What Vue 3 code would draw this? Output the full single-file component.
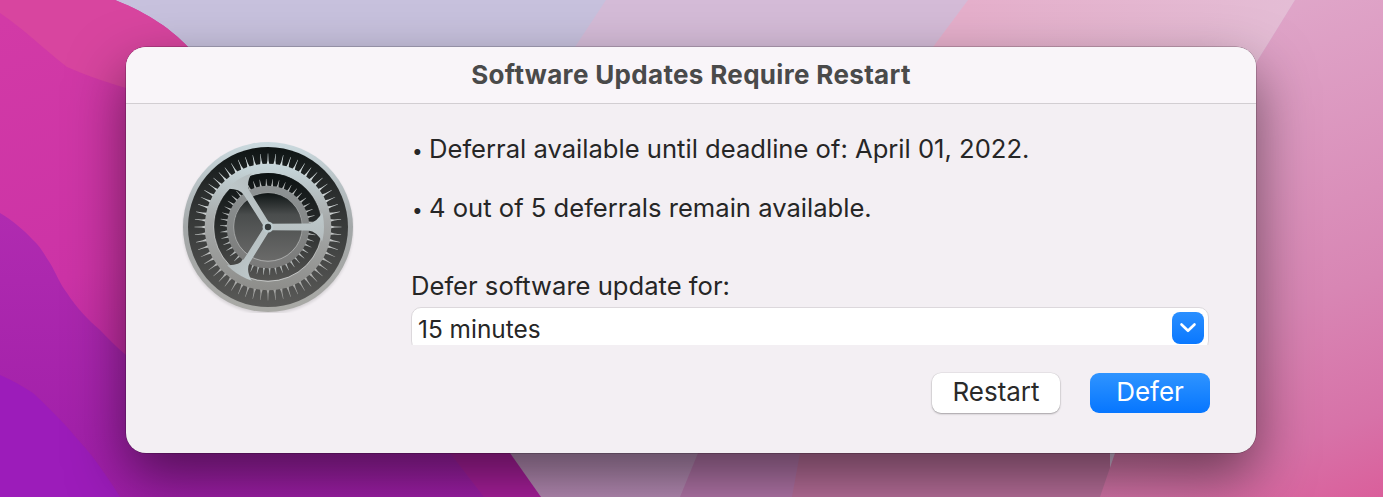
<script setup>
const cx = 86
const cy = 86
function teeth(count, rBase, rTip, halfBase, offset = 0) {
  const out = []
  for (let i = 0; i < count; i++) {
    const a = offset + (i / count) * Math.PI * 2
    const c = Math.cos(a)
    const s = Math.sin(a)
    const px = -s
    const py = c
    const pt = (r, w) => `${(cx + c * r + px * w).toFixed(2)},${(cy + s * r + py * w).toFixed(2)}`
    out.push(`${pt(rBase, -halfBase)} ${pt(rBase + (rTip - rBase) * 0.45, -0.55)} ${pt(rTip, -0.2)} ${pt(rTip, 0.2)} ${pt(rBase + (rTip - rBase) * 0.45, 0.55)} ${pt(rBase, halfBase)}`)
  }
  return out
}
const outerTeeth = teeth(60, 61, 73.5, 1.7)
const innerTeeth = teeth(46, 40, 48, 1.2, 0.03)
const spokes = [0, 122, -122]
</script>

<template>
  <div class="desktop">
    <svg class="wallpaper" viewBox="0 0 1383 497" aria-hidden="true">
      <defs>
        <linearGradient id="rightPink" gradientUnits="userSpaceOnUse" x1="1200" y1="0" x2="1383" y2="497">
          <stop offset="0" stop-color="#e0a9cb" />
          <stop offset="0.6" stop-color="#d886b4" />
          <stop offset="0.85" stop-color="#d772a8" />
          <stop offset="1" stop-color="#da5f9b" />
        </linearGradient>
        <linearGradient id="wedge" gradientUnits="userSpaceOnUse" x1="968" y1="0" x2="1295" y2="0">
          <stop offset="0" stop-color="#e5afcb" />
          <stop offset="1" stop-color="#e4bdd5" />
        </linearGradient>
        <linearGradient id="magenta" gradientUnits="userSpaceOnUse" x1="60" y1="0" x2="240" y2="497">
          <stop offset="0" stop-color="#d23aa6" />
          <stop offset="0.5" stop-color="#cc33a6" />
          <stop offset="1" stop-color="#ab1f9e" />
        </linearGradient>
        <linearGradient id="purple" gradientUnits="userSpaceOnUse" x1="0" y1="213" x2="0" y2="497">
          <stop offset="0" stop-color="#b02bb0" />
          <stop offset="1" stop-color="#9f1ea8" />
        </linearGradient>
        <linearGradient id="bandA" gradientUnits="userSpaceOnUse" x1="0" y1="300" x2="0" y2="497">
          <stop offset="0" stop-color="#b898bb" />
          <stop offset="1" stop-color="#b88cb6" />
        </linearGradient>
      </defs>
      <rect width="1383" height="497" fill="#d4bbd7" />
      <path d="M0 0 L606 0 L575 47 L575 300 L0 300 Z" fill="#c7c1dd" />
      <rect x="400" y="300" width="700" height="197" fill="url(#bandA)" />
      <path d="M698 453 L680 497 L1110 497 L1110 300 L698 300 Z" fill="#b476aa" />
      <path d="M800 453 L792 497 L1110 497 L1110 300 L800 300 Z" fill="#bb709c" />
      <path d="M968 0 L1295 0 L1256 63 L1256 200 L933 200 L933 47 Z" fill="url(#wedge)" />
      <path d="M1295 0 L1383 0 L1383 497 L1100 497 L1115 453 L1256 63 Z" fill="url(#rightPink)" />
      <path d="M0 0 L115 0 C150 14 172 30 188 47 L510 453 L541 497 L0 497 Z" fill="url(#magenta)" />
      <path d="M50 0 L115 0 C150 14 172 30 188 47 L200 90 L126 88 C100 80 85 75 67 67 C45 50 25 30 0 13 L0 0 Z" fill="#d8459f" />
      <path d="M0 213 C12 220 24 230 33 240 C40 246 44 254 50 263 C56 273 60 284 67 293 C76 307 88 320 100 330 C108 338 116 347 126 355 L450 453 L484 497 L0 497 Z" fill="url(#purple)" />
      <path d="M0 375 C12 380 22 386 33 393 C45 404 56 415 67 427 C78 440 90 452 100 467 C108 478 114 487 120 497 L0 497 Z" fill="#9c1cba" />
    </svg>

    <section class="dialog">
      <header class="titlebar">Software Updates Require Restart</header>
      <div class="body">
        <svg class="gear" viewBox="0 0 172 172" aria-hidden="true">
          <defs>
            <linearGradient id="rim" x1="0" y1="0" x2="0" y2="1">
              <stop offset="0" stop-color="#cbdadf" />
              <stop offset="0.5" stop-color="#a3a7a8" />
              <stop offset="1" stop-color="#a9a9a5" />
            </linearGradient>
            <linearGradient id="well" x1="0" y1="0" x2="0" y2="1">
              <stop offset="0" stop-color="#0e1414" />
              <stop offset="0.3" stop-color="#2c2f2f" />
              <stop offset="1" stop-color="#5a5a58" />
            </linearGradient>
            <linearGradient id="metal" gradientUnits="userSpaceOnUse" x1="0" y1="22" x2="0" y2="150">
              <stop offset="0" stop-color="#c8d8dc" />
              <stop offset="0.45" stop-color="#a6a9a9" />
              <stop offset="1" stop-color="#8d8d8a" />
            </linearGradient>
            <linearGradient id="tooth" gradientUnits="userSpaceOnUse" x1="0" y1="12" x2="0" y2="160">
              <stop offset="0" stop-color="#d4dfe1" />
              <stop offset="0.5" stop-color="#c4c7c7" />
              <stop offset="1" stop-color="#9f9f9d" />
            </linearGradient>
            <linearGradient id="pit" x1="0" y1="0" x2="0" y2="1">
              <stop offset="0" stop-color="#0c1212" />
              <stop offset="0.45" stop-color="#262929" />
              <stop offset="1" stop-color="#555553" />
            </linearGradient>
            <linearGradient id="midRing" gradientUnits="userSpaceOnUse" x1="0" y1="45" x2="0" y2="127">
              <stop offset="0" stop-color="#8e9394" />
              <stop offset="1" stop-color="#7a7a79" />
            </linearGradient>
            <linearGradient id="core" gradientUnits="userSpaceOnUse" x1="0" y1="52" x2="0" y2="120">
              <stop offset="0" stop-color="#0f1515" />
              <stop offset="0.32" stop-color="#4a4d4d" />
              <stop offset="1" stop-color="#6a6a69" />
            </linearGradient>
            <linearGradient id="spoke" gradientUnits="userSpaceOnUse" x1="0" y1="30" x2="0" y2="140">
              <stop offset="0" stop-color="#cbdadd" />
              <stop offset="1" stop-color="#a8acad" />
            </linearGradient>
            <linearGradient id="edgeLight" gradientUnits="userSpaceOnUse" x1="0" y1="30" x2="0" y2="142">
              <stop offset="0" stop-color="#ffffff" stop-opacity="0" />
              <stop offset="1" stop-color="#e6e8e8" stop-opacity="0.75" />
            </linearGradient>
            <filter id="soft" x="-10%" y="-10%" width="120%" height="120%">
              <feGaussianBlur stdDeviation="1.4" />
            </filter>
            <clipPath id="wellClip">
              <circle cx="86" cy="86" r="56" />
            </clipPath>
          </defs>
          <circle cx="86" cy="88" r="85" fill="#000" opacity="0.12" filter="url(#soft)" />
          <circle cx="86" cy="86" r="85" fill="url(#rim)" />
          <circle cx="86" cy="86" r="80" fill="url(#well)" />
          <polygon v-for="(p, i) in outerTeeth" :key="'o' + i" :points="p" fill="url(#tooth)" />
          <circle cx="86" cy="86" r="58.5" fill="none" stroke="url(#metal)" stroke-width="9.5" />
          <circle cx="86" cy="86" r="54" fill="url(#pit)" />
          <circle cx="86" cy="86" r="54.2" fill="none" stroke="url(#edgeLight)" stroke-width="1" />
          <polygon v-for="(p, i) in innerTeeth" :key="'i' + i" :points="p" fill="#b3b7b7" />
          <circle cx="86" cy="86" r="37.5" fill="none" stroke="url(#midRing)" stroke-width="7.5" />
          <circle cx="86" cy="86" r="34" fill="url(#core)" />
          <circle cx="86" cy="86" r="34.2" fill="none" stroke="url(#edgeLight)" stroke-width="0.8" />
          <g clip-path="url(#wellClip)">
            <g v-for="a in spokes" :key="a" :transform="`rotate(${a} 86 86)`">
              <path d="M86 82.8 L126 82.6 Q135 82 141 70 L146 70 L146 102 L141 102 Q135 90 126 89.4 L86 89.2 Z" fill="url(#spoke)" />
            </g>
          </g>
          <circle cx="86" cy="86" r="5.5" fill="#bccacd" />
          <circle cx="86" cy="86" r="3.2" fill="#343a3b" />
        </svg>

        <div class="content">
          <p class="line"><span class="dot">•</span>Deferral available until deadline of: April 01, 2022.</p>
          <p class="line second"><span class="dot">•</span>4 out of 5 deferrals remain available.</p>
          <label class="line prompt">Defer software update for:</label>
          <div class="select-clip">
            <div class="select">
              <span class="value">15 minutes</span>
              <span class="stepper">
                <svg width="20" height="14" viewBox="0 0 20 14" aria-hidden="true">
                  <path d="M3.5 3.5 L10 9.8 L16.5 3.5" fill="none" stroke="#fff" stroke-width="2.6" stroke-linecap="round" stroke-linejoin="round" />
                </svg>
              </span>
            </div>
          </div>
          <div class="actions">
            <button class="btn restart" type="button">Restart</button>
            <button class="btn defer" type="button">Defer</button>
          </div>
        </div>
      </div>
    </section>
  </div>
</template>

<style scoped>
.desktop {
  position: relative;
  width: 1383px;
  height: 497px;
  overflow: hidden;
  padding: 47px 127px 44px 126px;
  box-sizing: border-box;
  font-family: Inter, "Liberation Sans", sans-serif;
}
.wallpaper {
  position: absolute;
  inset: 0;
  width: 1383px;
  height: 497px;
}
.dialog {
  position: relative;
  height: 406px;
  border-radius: 20px;
  overflow: hidden;
  background: #f3eff3;
  display: flex;
  flex-direction: column;
  box-shadow: 0 24px 56px rgba(0, 0, 0, 0.5), 0 0 0 0.5px rgba(0, 0, 0, 0.35);
}
.titlebar {
  height: 54px;
  padding-bottom: 2px;
  flex: none;
  display: flex;
  align-items: center;
  justify-content: center;
  background: #f9f5f9;
  border-bottom: 1px solid #d2ced2;
  color: #4a4a4a;
  font-size: 26px;
  font-weight: 700;
  letter-spacing: 0.33px;
}
.body {
  flex: 1;
  display: flex;
  gap: 57px;
  padding: 28px 46px 0 56px;
}
.gear {
  width: 172px;
  height: 172px;
  flex: none;
  margin-top: 9px;
}
.content {
  flex: 1;
  display: flex;
  flex-direction: column;
  color: #262626;
  font-size: 25.6px;
}
.line {
  margin: 0;
  height: 34px;
  line-height: 34px;
  white-space: nowrap;
}
.dot {
  display: inline-block;
  width: 18px;
  font-size: 19px;
  padding-left: 1px;
  box-sizing: border-box;
}
.second {
  margin-top: 25px;
}
.prompt {
  display: block;
  margin-top: 44px;
}
.select-clip {
  margin-top: 4px;
  width: 798px;
  height: 38px;
  overflow: hidden;
}
.select {
  height: 44px;
  box-sizing: border-box;
  border: 1px solid #dcd8dc;
  border-radius: 10px;
  background: #fff;
  padding: 4px 4px 0 6px;
  display: flex;
  justify-content: space-between;
}
.value {
  line-height: 34px;
  font-size: 24.4px;
}
.stepper {
  width: 32px;
  height: 32px;
  border-radius: 8px;
  background: linear-gradient(#2a8fff, #0a78ff);
  display: flex;
  align-items: center;
  justify-content: center;
}
.actions {
  margin-top: 28px;
  display: flex;
  justify-content: flex-end;
  gap: 30px;
}
.btn {
  height: 40px;
  border: 0;
  border-radius: 9px;
  font: inherit;
  font-size: 26px;
  padding: 0 0 3px;
}
.restart {
  width: 128px;
  background: #fff;
  color: #2a2a2a;
  box-shadow: 0 1px 2px rgba(0, 0, 0, 0.3), 0 0 0 0.5px rgba(0, 0, 0, 0.08);
}
.defer {
  width: 120px;
  background: linear-gradient(#2f94ff, #0676ff);
  color: #fff;
}
</style>

<style>
body {
  margin: 0;
}
</style>
